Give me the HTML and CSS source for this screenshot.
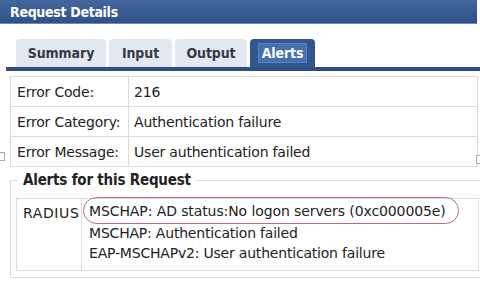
FILE: index.html
```html
<!DOCTYPE html>
<html>
<head>
<meta charset="utf-8">
<link rel="stylesheet" href="styles.css">
</head>
<body>
<div class="page">
  <div class="titlebar"><span class="title">Request Details</span></div>
  <div class="tabs">
    <div class="tab tab-summary">Summary</div>
    <div class="tab tab-input">Input</div>
    <div class="tab tab-output">Output</div>
    <div class="tab tab-alerts active"><span class="focus">Alerts</span></div>
  </div>
  <div class="tabbar"></div>
  <table class="details">
    <tr><td class="label">Error Code:</td><td class="value">216</td></tr>
    <tr><td class="label">Error Category:</td><td class="value">Authentication failure</td></tr>
    <tr><td class="label">Error Message:</td><td class="value">User authentication failed</td></tr>
  </table>
  <fieldset class="alerts">
    <legend>Alerts for this Request</legend>
    <table class="alert-table">
      <tr>
        <td class="source">RADIUS</td>
        <td class="messages">
          <div class="msg first"><span class="circled">MSCHAP: AD status:No logon servers (0xc000005e)</span></div>
          <div class="msg">MSCHAP: Authentication failed</div>
          <div class="msg">EAP-MSCHAPv2: User authentication failure</div>
        </td>
      </tr>
    </table>
  </fieldset>
  <span class="handle handle-left"></span>
  <span class="handle handle-right"></span>
</div>
</body>
</html>
```

FILE: styles.css
```css
html, body {
  margin: 0;
  padding: 0;
  background: #ffffff;
}
body {
  font-family: "DejaVu Sans", Verdana, sans-serif;
  color: #222;
  width: 480px;
  height: 284px;
  overflow: hidden;
}
.page {
  position: relative;
  width: 480px;
  height: 284px;
}
.titlebar {
  height: 24px;
  width: 477px;
  background: linear-gradient(#43669c, #2f5188);
  border-bottom: 1px solid #6d8ab5;
  display: flex;
  align-items: center;
  padding-left: 10px;
  box-sizing: border-box;
}
.title {
  color: #fff;
  font-family: "DejaVu Sans Condensed", "DejaVu Sans", sans-serif;
  font-weight: bold;
  font-size: 14px;
  letter-spacing: -0.3px;
}
.tabs {
  display: flex;
  gap: 3px;
  margin-top: 15px;
  padding-left: 16px;
  height: 28px;
}
.tab {
  box-sizing: border-box;
  height: 28px;
  background: #e3e8f0;
  border-radius: 4px 4px 0 0;
  font-family: "DejaVu Sans Condensed", "DejaVu Sans", sans-serif;
  font-weight: bold;
  font-size: 14px;
  color: #333a45;
  display: flex;
  align-items: center;
  justify-content: center;
  letter-spacing: -0.1px;
}
.tab-summary { width: 90px; }
.tab-input { width: 63px; }
.tab-output { width: 72px; }
.tab-alerts { width: 65px; }
.tab.active {
  background: #34568d;
  color: #fff;
}
.focus {
  background: #4670ad;
  border: 1px solid #5a84c2;
  padding: 1px 3px;
  line-height: 16px;
}
.tabbar {
  height: 4px;
  margin-left: 6px;
  background: #2d4f86;
}
.details {
  border-collapse: collapse;
  margin: 5px 0 0 10px;
  width: 468px;
  font-size: 14px;
}
.details td {
  border: 1px solid #dcdcdc;
  height: 29px;
  padding: 0 5px;
  vertical-align: middle;
  letter-spacing: -0.2px;
}
.details td.label {
  width: 106px;
  padding-left: 6px;
}
.alerts {
  margin: 4px 0 0 10px;
  padding: 16px 0 6px 5px;
  border: 1px solid #dcdcdc;
  border-right: none;
  width: 475px;
  box-sizing: border-box;
  position: relative;
}
.alerts legend {
  font-family: "DejaVu Sans Condensed", "DejaVu Sans", sans-serif;
  font-weight: bold;
  font-size: 15px;
  padding: 0 5px;
  margin-left: 2px;
  color: #222;
  letter-spacing: -0.2px;
}
.alert-table {
  border-collapse: collapse;
  width: 463px;
  font-size: 14px;
  margin-top: -7px;
}
.alert-table td {
  border: 1px solid #dcdcdc;
  vertical-align: top;
  letter-spacing: -0.2px;
}
.alert-table td.source {
  width: 58px;
  padding: 6px 0 0 6px;
  letter-spacing: 0.6px;
}
.messages {
  padding: 0 0 7px 1px;
}
.msg {
  line-height: 20px;
  padding-left: 6px;
}
.msg.first {
  padding-left: 0;
}
.circled {
  display: inline-block;
  border: 1px solid #c2658a;
  border-radius: 14px;
  padding: 3px 12px 2px 5px;
  line-height: 20px;
  margin-top: -2px;
  margin-bottom: -1px;
  letter-spacing: -0.1px;
}
.handle {
  position: absolute;
  width: 4px;
  height: 7px;
  border: 1px solid #aaa;
  background: #fff;
}
.handle-left { left: -1px; top: 152px; }
.handle-right { left: 476px; top: 155px; }
```
